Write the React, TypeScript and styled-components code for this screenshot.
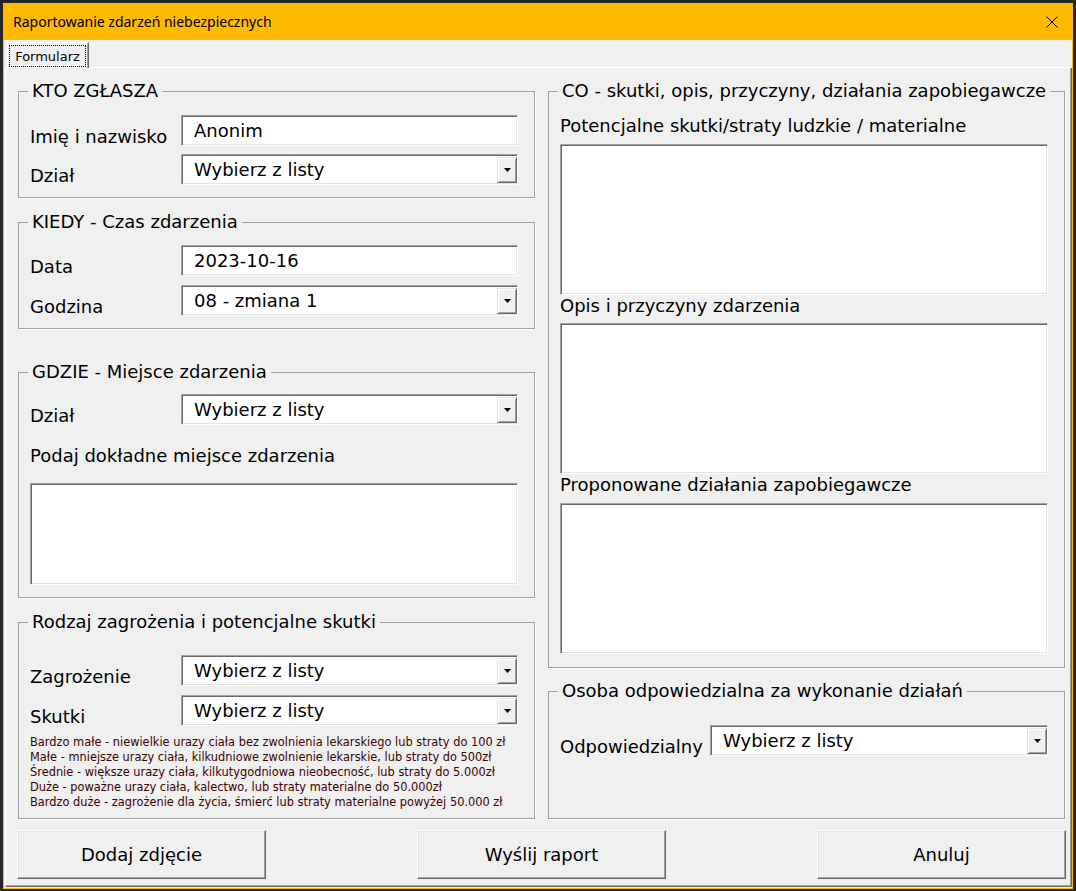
import React from "react";
import styled, { createGlobalStyle, css } from "styled-components";

const GlobalStyle = createGlobalStyle`
  html, body { margin: 0; padding: 0; background: #262626; }
  body {
    width: 1076px; height: 891px; overflow: hidden;
    font-family: "DejaVu Sans", "Liberation Sans", Arial, sans-serif;
    color: #000;
  }
  #root { width: 1076px; height: 891px; }
`;

const Desktop = styled.div`
  width: 1076px;
  height: 891px;
  box-sizing: border-box;
  padding: 3px 3px 2px 3px;
  background: #262626;
  display: flex;
`;

const Window = styled.div`
  width: 1070px;
  height: 886px;
  box-sizing: border-box;
  border: 1px solid #ffb900;
  border-top: none;
  background: #f0f0f0;
  display: flex;
  flex-direction: column;
`;

const TitleBar = styled.div`
  height: 37px;
  flex: none;
  background: #ffb900;
  display: flex;
  align-items: center;
  padding-left: 9px;
`;

const TitleText = styled.span`
  font-family: "Noto Sans", "Open Sans", sans-serif;
  font-size: 14px;
  color: #000;
`;

const CloseButton = styled.div`
  margin-left: auto;
  width: 40px;
  height: 37px;
  display: flex;
  align-items: center;
  justify-content: center;
`;

const Body = styled.div`
  flex: 1;
  display: flex;
  flex-direction: column;
  padding: 2px 0 1px 1px;
  min-height: 0;
`;

const TabStrip = styled.div`
  height: 26px;
  flex: none;
  display: flex;
  padding-left: 2px;
`;

const Tab = styled.div`
  width: 82px;
  height: 26px;
  box-sizing: border-box;
  border-top: 1px solid #fff;
  border-left: 1px solid #fff;
  border-right: 1px solid #696969;
  box-shadow: inset -1px 0 0 #a0a0a0;
  padding: 2px 2px 1px 1px;
  display: flex;
`;

const FocusRing = styled.div`
  flex: 1;
  border: 1px dotted #000;
  display: flex;
  align-items: center;
  justify-content: center;
  font-size: 13px;
`;

const TabFiller = styled.div`
  flex: 1;
  border-bottom: 1px solid #fff;
  margin-right: 1px;
`;

const Page = styled.div`
  flex: 1;
  min-height: 0;
  box-sizing: border-box;
  border-left: 1px solid #fff;
  border-right: 1px solid #696969;
  border-bottom: 1px solid #696969;
  box-shadow: inset -1px -1px 0 #a0a0a0;
  padding: 12px 6px 7px 12px;
  display: flex;
  flex-direction: column;
`;

const Columns = styled.div`
  display: grid;
  grid-template-columns: 517px 517px;
  column-gap: 13px;
  height: 739px;
`;

const Column = styled.div`
  display: flex;
  flex-direction: column;
`;

const Frame = styled.fieldset<{ $h: number; $mb?: number }>`
  margin: 0 0 ${(p) => p.$mb ?? 0}px 0;
  padding: 0;
  min-width: 0;
  height: ${(p) => p.$h}px;
  box-sizing: border-box;
  border: 1px solid #a0a0a0;
  box-shadow: 1px 1px 0 #fff;
`;

const Legend = styled.legend`
  margin-left: 9px;
  padding: 0 4px;
  font-size: 18px;
  line-height: 22px;
`;

const FrameBody = styled.div<{ $pt: number }>`
  padding: ${(p) => p.$pt}px 16px 0 11px;
  display: flex;
  flex-direction: column;
`;

const FieldRow = styled.div<{ $lw?: number; $mt?: number }>`
  display: grid;
  grid-template-columns: ${(p) => p.$lw ?? 151}px 1fr;
  margin-top: ${(p) => p.$mt ?? 0}px;
  height: 31px;
`;

const Label = styled.span`
  align-self: end;
  margin-bottom: -2px;
  font-size: 18px;
  line-height: 22px;
  white-space: nowrap;
`;

const BlockLabel = styled.div<{ $mt?: number }>`
  margin-top: ${(p) => p.$mt ?? 0}px;
  font-size: 18px;
  line-height: 22px;
  white-space: nowrap;
`;

const sunken = css`
  box-sizing: border-box;
  background: #fff;
  border: 1px solid;
  border-color: #a0a0a0 #fff #fff #a0a0a0;
  box-shadow: inset 1px 1px 0 #696969, inset -1px -1px 0 #e3e3e3;
`;

const TextBox = styled.input`
  ${sunken};
  height: 31px;
  width: 100%;
  margin: 0;
  padding: 0 0 0 12px;
  font: inherit;
  font-size: 18px;
  color: #000;
  outline: none;
`;

const Combo = styled.div`
  ${sunken};
  height: 31px;
  display: flex;
  align-items: stretch;
`;

const ComboText = styled.span`
  flex: 1;
  padding-left: 12px;
  font-size: 18px;
  line-height: 29px;
  white-space: nowrap;
  overflow: hidden;
`;

const ComboArrow = styled.span`
  width: 20px;
  margin: 2px 0 1px 0;
  box-sizing: border-box;
  background: #f0f0f0;
  border: 1px solid;
  border-color: #e3e3e3 #696969 #696969 #e3e3e3;
  box-shadow: inset 1px 1px 0 #fff, inset -1px -1px 0 #a0a0a0;
  display: flex;
  align-items: center;
  justify-content: center;
`;

const TextArea = styled.textarea<{ $h: number; $mt?: number }>`
  ${sunken};
  display: block;
  width: 100%;
  height: ${(p) => p.$h}px;
  margin: ${(p) => p.$mt ?? 0}px 0 0 0;
  padding: 4px;
  resize: none;
  font: inherit;
  outline: none;
`;

const ScaleNote = styled.div`
  margin-top: 9px;
  font-size: 11.4px;
  line-height: 15px;
  color: #400000;
  white-space: nowrap;
`;

const ButtonRow = styled.div`
  display: flex;
  justify-content: space-between;
  margin: 11px -1px 0 -1px;
`;

const Button = styled.button`
  width: 249px;
  height: 49px;
  box-sizing: border-box;
  background: #f0f0f0;
  border: 1px solid;
  border-color: #fff #696969 #696969 #fff;
  box-shadow: inset -1px -1px 0 #a0a0a0, inset 1px 1px 0 #e3e3e3;
  font: inherit;
  font-size: 18px;
  color: #000;
  padding: 0;
`;

const Arrow = () => (
  <svg width="7" height="4" viewBox="0 0 7 4">
    <polygon points="0,0 7,0 3.5,4" fill="#000" />
  </svg>
);

const ComboBox = ({ value }: { value: string }) => (
  <Combo>
    <ComboText>{value}</ComboText>
    <ComboArrow>
      <Arrow />
    </ComboArrow>
  </Combo>
);

const skutki = [
  "Bardzo małe - niewielkie urazy ciała bez zwolnienia lekarskiego lub straty do 100 zł",
  "Małe - mniejsze urazy ciała, kilkudniowe zwolnienie lekarskie, lub straty do 500zł",
  "Średnie - większe urazy ciała, kilkutygodniowa nieobecność, lub straty do 5.000zł",
  "Duże - poważne urazy ciała, kalectwo, lub straty materialne do 50.000zł",
  "Bardzo duże - zagrożenie dla życia, śmierć lub straty materialne powyżej 50.000 zł",
];

export default function App() {
  return (
    <>
      <GlobalStyle />
      <Desktop>
        <Window>
          <TitleBar>
            <TitleText>Raportowanie zdarzeń niebezpiecznych</TitleText>
            <CloseButton>
              <svg width="12" height="12" viewBox="0 0 12 12">
                <path d="M0.5 0.5 L11.5 11.5 M11.5 0.5 L0.5 11.5" stroke="#000" strokeWidth="1" fill="none" />
              </svg>
            </CloseButton>
          </TitleBar>
          <Body>
            <TabStrip>
              <Tab>
                <FocusRing>Formularz</FocusRing>
              </Tab>
              <TabFiller />
            </TabStrip>
            <Page>
              <Columns>
                <Column>
                  <Frame $h={118} $mb={13}>
                    <Legend>KTO ZGŁASZA</Legend>
                    <FrameBody $pt={13}>
                      <FieldRow>
                        <Label>Imię i nazwisko</Label>
                        <TextBox defaultValue="Anonim" />
                      </FieldRow>
                      <FieldRow $mt={8}>
                        <Label>Dział</Label>
                        <ComboBox value="Wybierz z listy" />
                      </FieldRow>
                    </FrameBody>
                  </Frame>
                  <Frame $h={118} $mb={32}>
                    <Legend>KIEDY - Czas zdarzenia</Legend>
                    <FrameBody $pt={12}>
                      <FieldRow>
                        <Label>Data</Label>
                        <TextBox defaultValue="2023-10-16" />
                      </FieldRow>
                      <FieldRow $mt={9}>
                        <Label>Godzina</Label>
                        <ComboBox value="08 - zmiana 1" />
                      </FieldRow>
                    </FrameBody>
                  </Frame>
                  <Frame $h={237} $mb={13}>
                    <Legend>GDZIE - Miejsce zdarzenia</Legend>
                    <FrameBody $pt={11}>
                      <FieldRow>
                        <Label>Dział</Label>
                        <ComboBox value="Wybierz z listy" />
                      </FieldRow>
                      <BlockLabel $mt={20}>Podaj dokładne miejsce zdarzenia</BlockLabel>
                      <TextArea $h={102} $mt={16} />
                    </FrameBody>
                  </Frame>
                  <Frame $h={208}>
                    <Legend>Rodzaj zagrożenia i potencjalne skutki</Legend>
                    <FrameBody $pt={22}>
                      <FieldRow>
                        <Label>Zagrożenie</Label>
                        <ComboBox value="Wybierz z listy" />
                      </FieldRow>
                      <FieldRow $mt={9}>
                        <Label>Skutki</Label>
                        <ComboBox value="Wybierz z listy" />
                      </FieldRow>
                      <ScaleNote>
                        {skutki.map((s) => (
                          <div key={s}>{s}</div>
                        ))}
                      </ScaleNote>
                    </FrameBody>
                  </Frame>
                </Column>
                <Column>
                  <Frame $h={588} $mb={12}>
                    <Legend>CO - skutki, opis, przyczyny, działania zapobiegawcze</Legend>
                    <FrameBody $pt={13}>
                      <BlockLabel>Potencjalne skutki/straty ludzkie / materialne</BlockLabel>
                      <TextArea $h={151} $mt={7} />
                      <BlockLabel>Opis i przyczyny zdarzenia</BlockLabel>
                      <TextArea $h={151} $mt={6} />
                      <BlockLabel>Proponowane działania zapobiegawcze</BlockLabel>
                      <TextArea $h={151} $mt={7} />
                    </FrameBody>
                  </Frame>
                  <Frame $h={139}>
                    <Legend>Osoba odpowiedzialna za wykonanie działań</Legend>
                    <FrameBody $pt={23}>
                      <FieldRow $lw={150}>
                        <Label>Odpowiedzialny</Label>
                        <ComboBox value="Wybierz z listy" />
                      </FieldRow>
                    </FrameBody>
                  </Frame>
                </Column>
              </Columns>
              <ButtonRow>
                <Button>Dodaj zdjęcie</Button>
                <Button>Wyślij raport</Button>
                <Button>Anuluj</Button>
              </ButtonRow>
            </Page>
          </Body>
        </Window>
      </Desktop>
    </>
  );
}
